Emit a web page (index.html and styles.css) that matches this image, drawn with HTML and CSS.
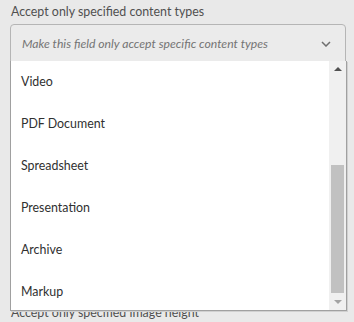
FILE: index.html
```html
<!DOCTYPE html>
<html>

<head>
    <meta name="viewport" content="width=device-width, initial-scale=1">
    <title>Content types</title>
    <link rel="stylesheet" href="styles.css">
</head>

<body>
    <div class="field">
        <label class="label">Accept only specified content types</label>
        <div class="select">
            <span class="placeholder">Make this field only accept specific content types</span>
            <svg class="chevron" width="10" height="6" viewBox="0 0 10 6">
                <path d="M1 1 L5 5 L9 1" fill="none" stroke="#6e6e6e" stroke-width="1.5" />
            </svg>
            <div class="menu">
                <ul class="options">
                    <li>Video</li>
                    <li>PDF Document</li>
                    <li>Spreadsheet</li>
                    <li>Presentation</li>
                    <li>Archive</li>
                    <li>Markup</li>
                </ul>
                <div class="scrollbar">
                    <span class="arrow up"></span>
                    <div class="track">
                        <div class="thumb"></div>
                    </div>
                    <span class="arrow down"></span>
                </div>
            </div>
        </div>
    </div>
    <div class="field next">
        <label class="label">Accept only specified image height</label>
    </div>
</body>

</html>
```

FILE: styles.css
```css
body {
    margin: 0;
    font-family: 'Lato', sans-serif;
    background-color: #e9e9e9;
    color: #4b4b4b;
    height: 322px;
    overflow: hidden;
}

.field {
    padding: 0 8px 0 10px;
}

.label {
    display: block;
    font-size: 12.4px;
    line-height: 18px;
    padding: 3px 0 3px 1px;
    color: #505050;
}

.select {
    position: relative;
    height: 36px;
    border: 1px solid #b5b5b5;
    border-radius: 4px 4px 0 0;
    background-color: #ebebeb;
    display: flex;
    align-items: center;
    justify-content: space-between;
    padding: 0 14px 0 11px;
}

.placeholder {
    font-size: 12.2px;
    font-style: italic;
    color: #747474;
}

.chevron {
    margin-top: 2px;
}

.menu {
    position: absolute;
    top: 100%;
    left: -1px;
    width: 335px;
    height: 249px;
    background-color: #ffffff;
    border: 1px solid #a0a0a0;
    border-top: none;
    display: flex;
    z-index: 2;
    box-shadow: 1px 1px 0 #d0d0d0;
}

.options {
    list-style: none;
    margin: 0;
    padding: 0;
    flex: 1;
}

.options li {
    height: 42px;
    padding: 12px 0 0 10px;
    box-sizing: border-box;
    font-size: 12.4px;
    line-height: 17px;
    color: #303030;
}

.scrollbar {
    width: 17px;
    background-color: #f0f0f0;
    display: flex;
    flex-direction: column;
    align-items: center;
}

.arrow {
    width: 0;
    height: 0;
    border-left: 4px solid transparent;
    border-right: 4px solid transparent;
    margin: 6px 0;
}

.arrow.up {
    border-bottom: 4px solid #505050;
}

.arrow.down {
    border-top: 4px solid #a3a3a3;
}

.track {
    flex: 1;
    width: 100%;
    display: flex;
    flex-direction: column;
    justify-content: flex-end;
}

.thumb {
    height: 128px;
    margin: 0 2px 1px;
    background-color: #c1c1c1;
}

.next {
    margin-top: 239px;
}
```
